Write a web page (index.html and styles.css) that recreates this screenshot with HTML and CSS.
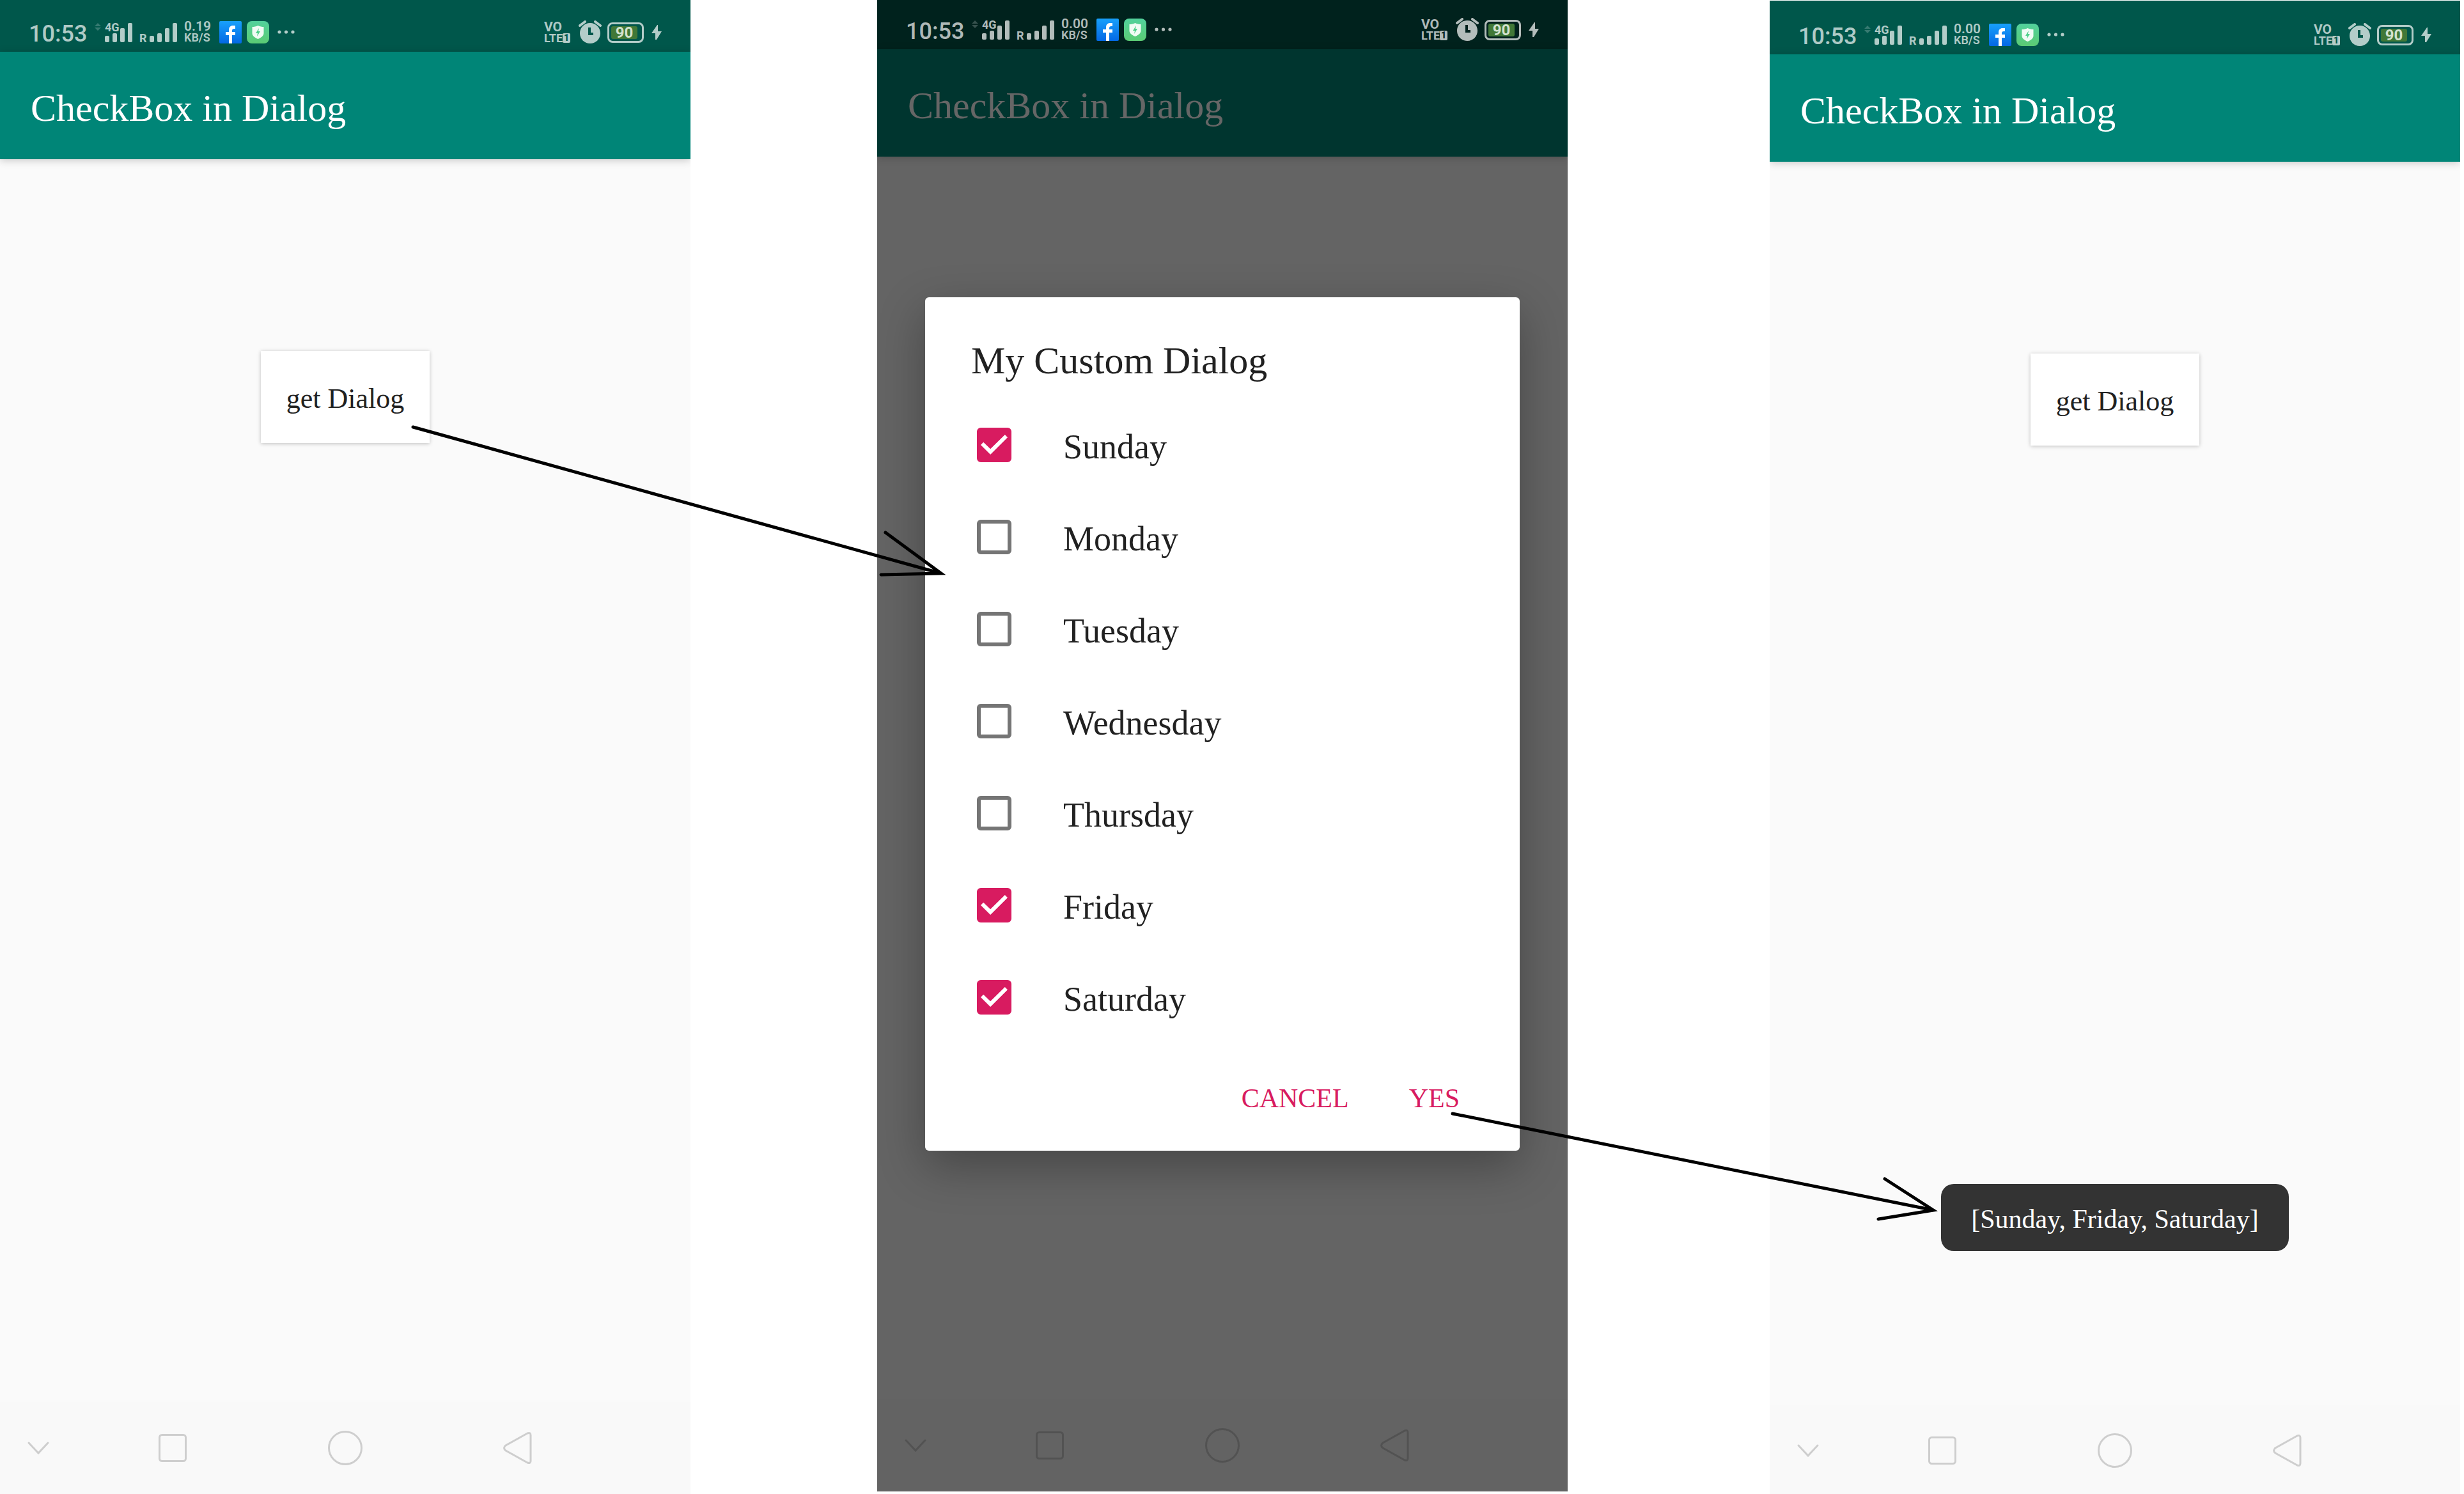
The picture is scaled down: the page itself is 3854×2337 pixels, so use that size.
FILE: index.html
```html
<!DOCTYPE html>
<html lang="en">
<head>
<meta charset="utf-8">
<title>CheckBox in Dialog</title>
<link rel="stylesheet" href="styles.css">
</head>
<body>
<svg class="symbols" aria-hidden="true">
  <defs>
    <linearGradient id="fb-fill" x1="0" y1="0" x2="0" y2="1"><stop offset="0" stop-color="#18a0fb"/><stop offset="1" stop-color="#0468e4"/></linearGradient>
    <linearGradient id="guard-fill" x1="0" y1="0" x2="0" y2="1"><stop offset="0" stop-color="#52d19c"/><stop offset="1" stop-color="#5bcb74"/></linearGradient>
    <symbol id="bars" viewBox="0 0 43 30">
      <rect x="0" y="20" width="7" height="10" rx="2"/><rect x="12" y="16" width="7" height="14" rx="2"/><rect x="24" y="8" width="7" height="22" rx="2"/><rect x="36" y="0" width="7" height="30" rx="2"/>
    </symbol>
    <symbol id="updown" viewBox="0 0 10 12"><path d="M5 0l5 5H0zM5 12L0 7h10z"/></symbol>
    <symbol id="facebook" viewBox="0 0 35 35">
      <rect width="35" height="35" rx="2" fill="url(#fb-fill)"/>
      <path d="M15 35V22h-5v-5h5v-3c0-5 3-7 6-7h4v5h-2c-2 0-3 1-3 3v2h5v5h-5v13z" fill="#fff"/>
    </symbol>
    <symbol id="guard" viewBox="0 0 35 35">
      <rect width="35" height="35" rx="8" fill="url(#guard-fill)"/>
      <path d="M17.500 7c3 1.500 6 2 9 2v10c0 4-4 7-9 9-5-2-9-5-9-9V9c3 0 6-.5 9-2z" fill="#f1fbf5"/>
      <path d="M19 11l-5 8h3l-1 5 5-8h-3z" fill="#4fd08a"/>
    </symbol>
    <symbol id="dots" viewBox="0 0 28 6"><circle cx="3" cy="3" r="2.600"/><circle cx="13.500" cy="3" r="2.600"/><circle cx="24" cy="3" r="2.600"/></symbol>
    <symbol id="alarm" viewBox="0 0 36 36">
      <path fill-rule="evenodd" d="M18 4c9 0 16 7 16 16s-7 16-16 16S2 29 2 20 9 4 18 4zm-3 7v12h8v-4h-4v-8z"/>
      <path d="M2 8l8-6M34 8l-8-6" fill="none" stroke="currentColor" stroke-width="4" stroke-linecap="round"/>
    </symbol>
    <symbol id="bolt" viewBox="0 0 16 24"><path d="M9 0L0 13h6v10h2l8-13h-6V0z"/></symbol>
    <symbol id="nav-hide" viewBox="0 0 36 22"><path d="M3 3l15 16L33 3"/></symbol>
    <symbol id="nav-recent" viewBox="0 0 44 44"><rect x="1.500" y="1.500" width="41" height="41" rx="4"/></symbol>
    <symbol id="nav-home" viewBox="0 0 54 54"><circle cx="27" cy="27" r="25.500"/></symbol>
    <symbol id="nav-back" viewBox="0 0 46 52"><path d="M38 3L4 22q-5 4 0 8l34 19q5 2 5-3V6q0-5-5-3z"/></symbol>
  </defs>
</svg>

<div class="board">
  <section class="phone phone-start">
    <header class="status">
      <time class="clock">10:53</time>
      <svg class="updown"><use href="#updown"/></svg>
      <div class="signal"><span class="tag">4G</span><svg class="bars"><use href="#bars"/></svg></div>
      <span class="tag tag-roam">R</span><svg class="bars"><use href="#bars"/></svg>
      <div class="speed"><span class="rate">0.19</span><span class="unit">KB/S</span></div>
      <svg class="app-icon"><use href="#facebook"/></svg>
      <svg class="app-icon"><use href="#guard"/></svg>
      <svg class="dots"><use href="#dots"/></svg>
      <div class="volte"><span>VO</span><span class="lte">LTE<b class="sim">1</b></span></div>
      <svg class="alarm"><use href="#alarm"/></svg>
      <div class="battery"><span class="charge">90</span></div>
      <svg class="bolt"><use href="#bolt"/></svg>
    </header>
    <h1 class="app-bar">CheckBox in Dialog</h1>
    <main class="content"><button class="raised" type="button">get Dialog</button></main>
    <nav class="nav">
      <svg class="hide"><use href="#nav-hide"/></svg><svg class="recent"><use href="#nav-recent"/></svg><svg class="home"><use href="#nav-home"/></svg><svg class="back"><use href="#nav-back"/></svg>
    </nav>
  </section>

  <section class="phone phone-dialog">
    <header class="status">
      <time class="clock">10:53</time>
      <svg class="updown"><use href="#updown"/></svg>
      <div class="signal"><span class="tag">4G</span><svg class="bars"><use href="#bars"/></svg></div>
      <span class="tag tag-roam">R</span><svg class="bars"><use href="#bars"/></svg>
      <div class="speed"><span class="rate">0.00</span><span class="unit">KB/S</span></div>
      <svg class="app-icon"><use href="#facebook"/></svg>
      <svg class="app-icon"><use href="#guard"/></svg>
      <svg class="dots"><use href="#dots"/></svg>
      <div class="volte"><span>VO</span><span class="lte">LTE<b class="sim">1</b></span></div>
      <svg class="alarm"><use href="#alarm"/></svg>
      <div class="battery"><span class="charge">90</span></div>
      <svg class="bolt"><use href="#bolt"/></svg>
    </header>
    <h1 class="app-bar">CheckBox in Dialog</h1>
    <main class="content">
      <form class="dialog" role="dialog" aria-labelledby="dialog-title">
        <h2 class="dialog-title" id="dialog-title">My Custom Dialog</h2>
        <label class="day"><input type="checkbox" checked><span>Sunday</span></label>
        <label class="day"><input type="checkbox"><span>Monday</span></label>
        <label class="day"><input type="checkbox"><span>Tuesday</span></label>
        <label class="day"><input type="checkbox"><span>Wednesday</span></label>
        <label class="day"><input type="checkbox"><span>Thursday</span></label>
        <label class="day"><input type="checkbox" checked><span>Friday</span></label>
        <label class="day"><input type="checkbox" checked><span>Saturday</span></label>
        <div class="actions"><button class="flat" type="button">CANCEL</button><button class="flat" type="button">YES</button></div>
      </form>
    </main>
    <nav class="nav">
      <svg class="hide"><use href="#nav-hide"/></svg><svg class="recent"><use href="#nav-recent"/></svg><svg class="home"><use href="#nav-home"/></svg><svg class="back"><use href="#nav-back"/></svg>
    </nav>
  </section>

  <section class="phone phone-result">
    <header class="status">
      <time class="clock">10:53</time>
      <svg class="updown"><use href="#updown"/></svg>
      <div class="signal"><span class="tag">4G</span><svg class="bars"><use href="#bars"/></svg></div>
      <span class="tag tag-roam">R</span><svg class="bars"><use href="#bars"/></svg>
      <div class="speed"><span class="rate">0.00</span><span class="unit">KB/S</span></div>
      <svg class="app-icon"><use href="#facebook"/></svg>
      <svg class="app-icon"><use href="#guard"/></svg>
      <svg class="dots"><use href="#dots"/></svg>
      <div class="volte"><span>VO</span><span class="lte">LTE<b class="sim">1</b></span></div>
      <svg class="alarm"><use href="#alarm"/></svg>
      <div class="battery"><span class="charge">90</span></div>
      <svg class="bolt"><use href="#bolt"/></svg>
    </header>
    <h1 class="app-bar">CheckBox in Dialog</h1>
    <main class="content"><button class="raised" type="button">get Dialog</button><output class="toast">[Sunday, Friday, Saturday]</output></main>
    <nav class="nav">
      <svg class="hide"><use href="#nav-hide"/></svg><svg class="recent"><use href="#nav-recent"/></svg><svg class="home"><use href="#nav-home"/></svg><svg class="back"><use href="#nav-back"/></svg>
    </nav>
  </section>

  <svg class="arrows" viewBox="0 0 3854 2337" aria-hidden="true">
    <path d="M646 668L1472 897M1385 833l87 64-94 2"/>
    <path d="M2272 1742l752 151M2948 1844l76 49-86 14"/>
  </svg>
</div>
</body>
</html>
```

FILE: styles.css
```css
* { box-sizing: border-box; }

body {
  margin: 0;
  background: #fff;
  font-family: "Liberation Serif", "Times New Roman", serif;
  color: #212121;
}

.symbols { position: absolute; width: 0; height: 0; }

.board {
  position: relative;
  display: grid;
  grid-template-columns: minmax(0, 1080fr) minmax(0, 292fr) minmax(0, 1080fr) minmax(0, 316fr) minmax(0, 1080fr) minmax(0, 6fr);
  min-height: 100vh;
  overflow: hidden;
}

/* The three screenshots sit at slightly different heights on the board. */
.phone {
  --status: #00574b;
  --bar: #008577;
  --bar-text: #fff;
  --page: #fafafa;
  --nav: #f9f9f9;
  --nav-icon: #cecece;
  --status-height: 84px;
  display: flex;
  flex-direction: column;
  background: var(--page);
  overflow: hidden;
}

.phone-start { grid-column: 1; --status-height: 81px; }

.phone-dialog {
  grid-column: 3;
  margin-bottom: 4px;
  --status: #00221d;
  --bar: #00352f;
  --bar-text: #666;
  --page: #646464;
  --nav: #636363;
  --nav-icon: #525252;
  --status-height: 77px;
}

.phone-result { grid-column: 5; margin-top: 1px; }

.status {
  display: flex;
  align-items: flex-end;
  flex: none;
  height: var(--status-height);
  padding: 0 45px 13px 45px;
  background: var(--status);
  color: rgba(255, 255, 255, .7);
  fill: currentColor;
  font-family: Roboto, sans-serif;
}

.status svg, .status div, .status span { flex: none; }

.clock { width: 103px; font-size: 36px; font-weight: 500; line-height: 30px; }
.updown { width: 10px; height: 12px; margin: 0 6px 20px 0; opacity: .3; }
.tag { font-size: 18px; font-weight: 700; line-height: 16px; }
.bars { width: 43px; height: 30px; margin-bottom: 2px; }
.signal { display: grid; margin-right: 11px; }
.signal .tag { grid-area: 1 / 1; line-height: 14px; }
.signal .bars { grid-area: 1 / 1; }
.tag-roam { width: 16px; }
.speed { display: grid; width: 58px; padding-left: 11px; white-space: nowrap; font-weight: 600; }
.rate { font-size: 21px; line-height: 17px; }
.unit { font-size: 18px; line-height: 18px; }
.app-icon { width: 35px; height: 35px; margin-left: 8px; }
.dots { width: 28px; height: 6px; margin: 0 0 15px 13px; }

.volte { display: grid; width: 54px; margin-left: auto; font-size: 21px; font-weight: 700; line-height: 17px; }
.volte .lte { display: flex; align-items: center; font-size: 18px; }
.sim { width: 12px; border-radius: 2px; background: currentColor; font-size: 14px; line-height: 15px; text-align: center; -webkit-text-fill-color: var(--status); }
.alarm { width: 36px; height: 36px; }
.battery { display: flex; align-items: center; width: 57px; height: 32px; margin: 0 12px 1px 9px; padding: 3px; border: 3px solid; border-radius: 8px; }
.charge { width: 41px; border-radius: 3px; background: #417837; color: #d3e2cf; font-size: 24px; font-weight: 700; line-height: 20px; text-align: center; }
.bolt { width: 16px; height: 24px; margin-bottom: 5px; }

.app-bar {
  position: relative;
  flex: none;
  height: 168px;
  margin: 0;
  padding: 6px 48px 0;
  background: var(--bar);
  color: var(--bar-text);
  box-shadow: 0 2px 12px rgba(0, 0, 0, .2);
  font-size: 60px;
  font-weight: 400;
  line-height: 164px;
}

.content { display: flex; flex: 1; flex-direction: column; align-items: center; }

button { border: 0; font-family: inherit; color: inherit; }

.raised {
  height: 144px;
  margin-top: 300px;
  padding: 4px 40px 0;
  background: #fff;
  box-shadow: 0 1px 6px rgba(0, 0, 0, .24);
  font-size: 44px;
}

.dialog {
  width: calc(100% - 150px);
  margin-top: 220px;
  padding: 69px 72px 24px;
  border-radius: 6px;
  background: #fff;
  box-shadow: 0 24px 72px rgba(0, 0, 0, .3);
}

.dialog-title { margin: 0; padding-bottom: 30px; font-size: 60px; font-weight: 400; line-height: 60px; }

.day { display: flex; align-items: center; gap: 81px; height: 144px; padding-left: 9px; font-size: 54px; }
.day span { padding-top: 6px; }

.day input {
  appearance: none;
  display: grid;
  width: 54px;
  height: 54px;
  margin: 0;
  border: 6px solid #757575;
  border-radius: 6px;
}

.day input:checked { border-color: #d81b60; background: #d81b60; }

.day input:checked::before {
  content: "";
  background: #fff;
  clip-path: polygon(0 50%, 10% 40%, 36% 65%, 90% 12%, 100% 22%, 36% 86%);
}

.actions { display: flex; align-items: center; justify-content: flex-end; gap: 46px; height: 144px; padding-top: 28px; }
.flat { padding: 24px; background: none; color: #d81b60; font-size: 42px; line-height: 48px; }
.flat:last-child { padding-right: 22px; }

.toast {
  height: 105px;
  margin: auto 0 240px;
  padding: 5px 47px 0;
  border-radius: 20px;
  background: #333;
  color: #fff;
  font-size: 42px;
  line-height: 100px;
}

.nav {
  display: grid;
  grid-template-columns: 120fr 300fr 240fr 300fr 120fr;
  flex: none;
  align-items: center;
  justify-items: center;
  height: 144px;
  background: var(--nav);
  fill: none;
  stroke: var(--nav-icon);
  stroke-width: 3;
  stroke-linecap: round;
}

.phone-result .nav { height: 140px; padding-top: 4px; }

.hide { width: 36px; height: 22px; }
.recent { width: 44px; height: 44px; }
.home { width: 54px; height: 54px; }
.back { width: 46px; height: 52px; }

.arrows {
  position: absolute;
  top: 0;
  left: 0;
  width: 100%;
  height: auto;
  fill: none;
  stroke: #000;
  stroke-width: 5;
  stroke-linecap: round;
  pointer-events: none;
}
```
